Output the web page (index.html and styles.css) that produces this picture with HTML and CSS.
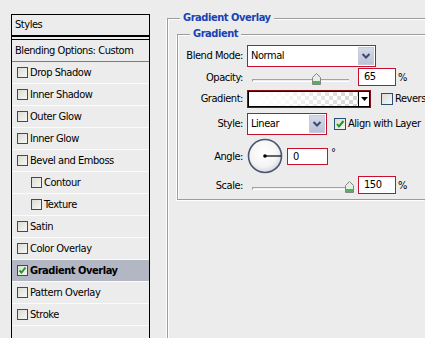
FILE: index.html
```html
<!DOCTYPE html>
<html>
<head>
<meta charset="utf-8">
<title>Layer Style</title>
<link rel="stylesheet" href="styles.css">
</head>
<body>
<div class="app">
  <div class="styles-panel">
    <div class="panel-head">Styles</div>
    <div class="panel-blend">Blending Options: Custom</div>
    <div class="item"><span class="cb"></span>Drop Shadow</div>
    <div class="item"><span class="cb"></span>Inner Shadow</div>
    <div class="item"><span class="cb"></span>Outer Glow</div>
    <div class="item"><span class="cb"></span>Inner Glow</div>
    <div class="item"><span class="cb"></span>Bevel and Emboss</div>
    <div class="item sub"><span class="cb"></span>Contour</div>
    <div class="item sub"><span class="cb"></span>Texture</div>
    <div class="item"><span class="cb"></span>Satin</div>
    <div class="item"><span class="cb"></span>Color Overlay</div>
    <div class="item selected"><span class="cb"><svg width="9" height="9" viewBox="0 0 9 9"><path d="M1.5 4.5 L3.5 6.5 L7.5 1.5" fill="none" stroke="#1f9a1f" stroke-width="2"/></svg></span>Gradient Overlay</div>
    <div class="item"><span class="cb"></span>Pattern Overlay</div>
    <div class="item"><span class="cb"></span>Stroke</div>
  </div>

  <div class="group outer">
    <div class="legend">Gradient Overlay</div>
    <div class="group inner">
      <div class="legend">Gradient</div>
      <div class="form">
        <div class="row r-blend">
          <span class="lbl">Blend Mode:</span>
          <div class="select sel-blend"><span class="sel-text">Normal</span><span class="sel-btn"><svg width="10" height="8" viewBox="0 0 10 8"><path d="M1.5 2 L5 5.5 L8.5 2" fill="none" stroke="#3a4a6e" stroke-width="2"/></svg></span></div>
        </div>
        <div class="row r-opacity">
          <span class="lbl">Opacity:</span>
          <div class="slider"><span class="track"></span><span class="thumb" style="left: 60px"><svg width="9" height="12" viewBox="0 0 9 12"><path d="M0.5 4.5 L4.5 0.5 L8.5 4.5 V11.5 H0.5 Z" fill="#e8ece8" stroke="#7d8a80"/><rect x="1" y="8" width="7" height="3" fill="#4fb35a"/></svg></span></div>
          <span class="num">65</span><span class="unit">%</span>
        </div>
        <div class="row r-grad">
          <span class="lbl">Gradient:</span>
          <div class="grad"><span class="grad-fill"></span><span class="grad-arrow"><svg width="7" height="4" viewBox="0 0 7 4"><path d="M0 0 H7 L3.5 4 Z" fill="#000"/></svg></span></div>
          <span class="cb2 rev"></span><span class="cb-text">Reverse</span>
        </div>
        <div class="row r-style">
          <span class="lbl">Style:</span>
          <div class="select sel-style"><span class="sel-text">Linear</span><span class="sel-btn"><svg width="10" height="8" viewBox="0 0 10 8"><path d="M1.5 2 L5 5.5 L8.5 2" fill="none" stroke="#3a4a6e" stroke-width="2"/></svg></span></div>
          <span class="cb2 align"><svg width="10" height="10" viewBox="0 0 10 10"><path d="M2 5 L4 7.5 L8.5 2" fill="none" stroke="#1f9a1f" stroke-width="2"/></svg></span><span class="cb-text">Align with Layer</span>
        </div>
        <div class="row r-angle">
          <span class="lbl">Angle:</span>
          <div class="dial"><svg width="36" height="36" viewBox="0 0 36 36"><defs><radialGradient id="dg" cx="0.45" cy="0.4" r="0.6"><stop offset="0" stop-color="#ffffff"/><stop offset="0.7" stop-color="#f4f4f4"/><stop offset="1" stop-color="#d6d8de"/></radialGradient></defs><circle cx="18" cy="18" r="16.5" fill="url(#dg)" stroke="#4a5672" stroke-width="1.6"/><line x1="18" y1="18" x2="34" y2="18" stroke="#000" stroke-width="1.2"/><circle cx="18" cy="18" r="1.8" fill="#000"/></svg></div>
          <span class="num angle">0</span><span class="deg">°</span>
        </div>
        <div class="row r-scale">
          <span class="lbl">Scale:</span>
          <div class="slider"><span class="track"></span><span class="thumb" style="left: 93px"><svg width="9" height="12" viewBox="0 0 9 12"><path d="M0.5 4.5 L4.5 0.5 L8.5 4.5 V11.5 H0.5 Z" fill="#e8ece8" stroke="#7d8a80"/><rect x="1" y="8" width="7" height="3" fill="#4fb35a"/></svg></span></div>
          <span class="num">150</span><span class="unit">%</span>
        </div>
      </div>
    </div>
  </div>
</div>
</body>
</html>
```

FILE: styles.css
```css
html, body {
  margin: 0;
  padding: 0;
}

body {
  width: 425px;
  height: 338px;
  overflow: hidden;
  background: #ececec;
  font-family: "DejaVu Sans Condensed", "DejaVu Sans", sans-serif;
  font-size: 11px;
  letter-spacing: -0.45px;
  color: #000;
}

.app {
  display: flex;
  align-items: flex-start;
  width: 425px;
  height: 338px;
  overflow: hidden;
}

/* ---------- left styles list ---------- */
.styles-panel {
  flex: none;
  margin: 14px 0 0 11px;
  width: 137px;
  height: 323px;
  border: 1px solid #000;
  border-bottom: none;
}

.panel-head {
  height: 20px;
  line-height: 20px;
  padding-left: 3px;
  border-bottom: 2px solid #000;
}

.panel-blend {
  margin-top: 2px;
  border-top: 1px solid #000;
  border-bottom: 1px solid #7c7c7c;
  height: 21px;
  line-height: 21px;
  padding-left: 3px;
}

.item {
  height: 21px;
  border-bottom: 1px solid #fbfbfb;
  display: flex;
  align-items: center;
  padding-left: 5px;
  white-space: nowrap;
}

.item.sub {
  padding-left: 19px;
}

.item.selected {
  background: #b3b6c3;
  font-weight: bold;
}

.cb {
  flex: none;
  width: 11px;
  height: 11px;
  box-sizing: border-box;
  border: 1px solid #2a4f78;
  background: linear-gradient(135deg, #dcdcd6, #f6f6f4);
  margin-right: 2px;
  display: flex;
  align-items: center;
  justify-content: center;
}

/* ---------- group boxes ---------- */
.group {
  border: 1px solid #9c9c9c;
  border-right: none;
  box-shadow: inset 1px 1px 0 #fff, -1px 1px 0 #fff;
}

.group.outer {
  flex: none;
  margin: 18px 0 0 17px;
  width: 257px;
  height: 319px;
  border-bottom: none;
}

.group.inner {
  margin: 10px 0 0 9px;
  width: 247px;
  padding-bottom: 4px;
}

.legend {
  width: fit-content;
  margin: -8px 0 0 12px;
  padding: 0 3px;
  height: 13px;
  line-height: 13px;
  background: #ececec;
  color: #1842b4;
  font-weight: bold;
  white-space: nowrap;
}

.form {
  margin-top: 4px;
}

.row {
  display: flex;
  align-items: center;
  white-space: nowrap;
}

.r-blend { height: 23px; }
.r-opacity { height: 20px; }
.r-grad { height: 23px; }
.r-style { height: 27px; }
.r-angle { height: 38px; }
.r-scale { height: 20px; }

.lbl {
  flex: none;
  width: 65px;
  margin-right: 4px;
  text-align: right;
}

/* select boxes */
.select {
  flex: none;
  height: 22px;
  box-sizing: border-box;
  border: 1px solid #c8102e;
  background: #fff;
  display: flex;
  align-items: center;
  padding: 1px;
}

.sel-blend { width: 129px; }
.sel-style { width: 80px; }

.sel-text {
  flex: 1;
  padding-left: 2px;
}

.sel-btn {
  flex: none;
  width: 16px;
  height: 18px;
  box-sizing: border-box;
  border: 1px solid #c6cbdb;
  background: linear-gradient(#d6dae8, #bcc2d6);
  display: flex;
  align-items: center;
  justify-content: center;
}

/* sliders */
.slider {
  flex: none;
  position: relative;
  width: 97px;
  height: 14px;
  margin: 4px 9px 0 5px;
}

.track {
  position: absolute;
  left: 0;
  right: 0;
  top: 7px;
  height: 1px;
  border-top: 1px solid #a4a4a4;
  border-bottom: 1px solid #fff;
  border-left: 1px solid #9a9a9a;
}

.thumb {
  position: absolute;
  top: 1px;
  width: 9px;
  height: 12px;
  display: block;
}

.thumb svg {
  display: block;
}

.num {
  flex: none;
  width: 38px;
  height: 18px;
  line-height: 16px;
  box-sizing: border-box;
  border: 1px solid #c8102e;
  background: #fff;
  padding-left: 5px;
}

.unit {
  margin-left: 2px;
}

/* gradient picker */
.grad {
  flex: none;
  width: 124px;
  height: 18px;
  box-sizing: border-box;
  border: 1px solid #8a0c14;
  box-shadow: inset 0 0 0 1px #000;
  padding: 1px;
  display: flex;
}

.grad-fill {
  flex: 1;
  background:
    linear-gradient(to right, #fff 0%, rgba(255,255,255,0.85) 30%, rgba(255,255,255,0) 100%),
    repeating-conic-gradient(#d4d4d4 0 25%, #fff 0 50%) 0 0 / 8px 8px;
}

.grad-arrow {
  flex: none;
  width: 10px;
  border-left: 1px solid #000;
  background: #fff;
  display: flex;
  align-items: center;
  justify-content: center;
}

.cb2 {
  flex: none;
  width: 12px;
  height: 12px;
  box-sizing: border-box;
  border: 1px solid #2a4f78;
  background: linear-gradient(135deg, #dcdcd6, #f6f6f4);
  display: flex;
  align-items: center;
  justify-content: center;
}

.cb2.rev { margin-left: 10px; }
.cb2.align { margin-left: 7px; }

.cb-text {
  margin-left: 2px;
}

/* angle */
.dial {
  flex: none;
  width: 36px;
  height: 36px;
  margin-right: 4px;
}

.dial svg {
  display: block;
}

.num.angle {
  width: 41px;
  height: 17px;
  line-height: 15px;
}

.deg {
  margin-left: 3px;
  align-self: flex-start;
  margin-top: 9px;
}
```
